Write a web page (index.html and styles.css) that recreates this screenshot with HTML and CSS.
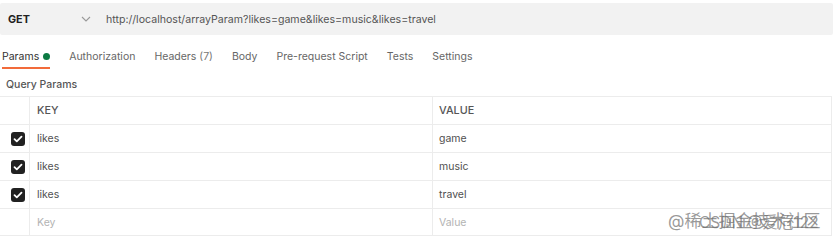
FILE: index.html
```html
<!DOCTYPE html>
<html>
<head>
<meta charset="utf-8">
<link rel="stylesheet" href="styles.css">
</head>
<body>
<div class="page">
  <div class="urlbar">
    <span class="method">GET</span>
    <svg class="chev" width="10" height="6" viewBox="0 0 10 6"><path d="M1 1l4 4 4-4" fill="none" stroke="#999" stroke-width="1.1"/></svg>
    <span class="url">http://localhost/arrayParam?likes=game&amp;likes=music&amp;likes=travel</span>
  </div>
  <div class="tabs">
    <div class="tab active">Params <span class="dot"></span></div>
    <div class="tab">Authorization</div>
    <div class="tab">Headers <span class="count">(7)</span></div>
    <div class="tab">Body</div>
    <div class="tab">Pre-request Script</div>
    <div class="tab">Tests</div>
    <div class="tab">Settings</div>
  </div>
  <div class="section">Query Params</div>
  <div class="table">
    <div class="row head">
      <div class="cell chk"></div>
      <div class="cell key">KEY</div>
      <div class="cell val">VALUE</div>
    </div>
    <div class="row">
      <div class="cell chk"><span class="box"><svg width="10" height="8" viewBox="0 0 10 8"><path d="M1.5 4.2l2.3 2.2L8.5 1.6" fill="none" stroke="#fff" stroke-width="1.8" stroke-linecap="round" stroke-linejoin="round"/></svg></span></div>
      <div class="cell key">likes</div>
      <div class="cell val">game</div>
    </div>
    <div class="row">
      <div class="cell chk"><span class="box"><svg width="10" height="8" viewBox="0 0 10 8"><path d="M1.5 4.2l2.3 2.2L8.5 1.6" fill="none" stroke="#fff" stroke-width="1.8" stroke-linecap="round" stroke-linejoin="round"/></svg></span></div>
      <div class="cell key">likes</div>
      <div class="cell val">music</div>
    </div>
    <div class="row">
      <div class="cell chk"><span class="box"><svg width="10" height="8" viewBox="0 0 10 8"><path d="M1.5 4.2l2.3 2.2L8.5 1.6" fill="none" stroke="#fff" stroke-width="1.8" stroke-linecap="round" stroke-linejoin="round"/></svg></span></div>
      <div class="cell key">likes</div>
      <div class="cell val">travel</div>
    </div>
    <div class="row">
      <div class="cell chk"></div>
      <div class="cell key ph">Key</div>
      <div class="cell val ph">Value</div>
    </div>
  </div>
  <div class="wm">@稀土掘金技术社区</div>
  <div class="wm2">CSDN @爱危122</div>
</div>
</body>
</html>
```
FILE: styles.css
```css
html, body { margin: 0; padding: 0; background: #fff; }
body { font-family: Inter, "Noto Sans CJK SC", sans-serif; color: #505050; font-size: 10.5px; }
.page { position: relative; width: 836px; height: 240px; overflow: hidden; padding-top: 3px; box-sizing: border-box; }
.urlbar { display: flex; align-items: center; height: 32px; background: #f2f2f2; margin-right: 3px; border-radius: 2px; }
.method { font-weight: 700; color: #222; font-size: 10.8px; margin-left: 8px; width: 73px; }
.chev { margin-right: 15px; }
.url { font-size: 10.6px; color: #555; }
.tabs { display: flex; height: 39px; align-items: flex-start; padding-top: 15px; box-sizing: border-box; }
.tab { font-size: 10.5px; color: #666; margin-right: 19px; position: relative; white-space: nowrap; height: 22px; }
.tab.active { margin-left: 2px; color: #333; margin-right: 19px; }
.tab.active::after { content: ""; position: absolute; left: 0; right: 0; top: 17px; height: 2px; background: #f26b3a; }
.dot { display: inline-block; width: 7px; height: 7px; border-radius: 50%; background: #0c7a43; margin-left: 1px; vertical-align: 0; }
.count { color: #777; }
.section { font-size: 10.5px; color: #555; padding: 4px 0 0 6px; height: 20px; box-sizing: border-box; font-weight: 500; }
.table { margin-top: 2px; width: 832px; }
.row { display: flex; height: 28px; border-top: 1px solid #ececec; box-sizing: border-box; }
.row:last-child { border-bottom: 1px solid #ececec; height: 28px; }
.cell { display: flex; align-items: center; font-size: 10.5px; color: #505050; }
.chk { width: 30px; border-right: 1px solid #ececec; justify-content: center; box-sizing: border-box; }
.key { width: 403px; padding-left: 7px; border-right: 1px solid #ececec; box-sizing: border-box; }
.val { flex: 1; padding-left: 6px; border-right: 1px solid #ececec; }
.head .cell { color: #555; font-weight: 500; font-size: 10.8px; }
.ph { color: #b3b3b3; }
.box { width: 14px; height: 14px; background: #212121; border-radius: 3px; display: flex; align-items: center; justify-content: center; margin-left: 6px; }
.wm { position: absolute; left: 668px; top: 207px; font-size: 17px; color: rgba(120,120,120,0.75); white-space: nowrap; }
.wm2 { position: absolute; left: 699px; top: 210px; font-size: 15.5px; color: rgba(110,110,110,0.7); white-space: nowrap; }
```
